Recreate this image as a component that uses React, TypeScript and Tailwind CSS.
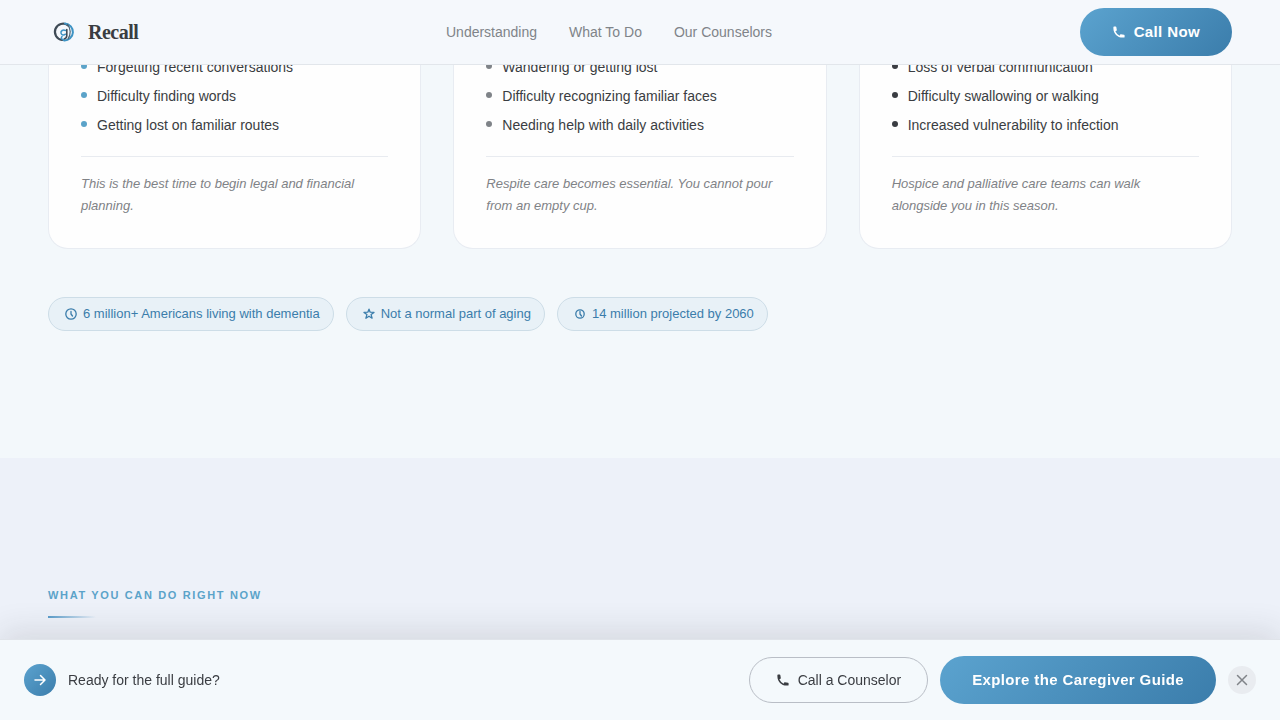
import React from 'react';

interface Stage {
  id: string;
  dot: string;
  signs: string[];
  note: string;
}

const stages: Stage[] = [
  {
    id: 'early',
    dot: 'bg-[#5ba3c9]',
    signs: ['Forgetting recent conversations', 'Difficulty finding words', 'Getting lost on familiar routes'],
    note: 'This is the best time to begin legal and financial planning.',
  },
  {
    id: 'middle',
    dot: 'bg-[#7f8388]',
    signs: ['Wandering or getting lost', 'Difficulty recognizing familiar faces', 'Needing help with daily activities'],
    note: 'Respite care becomes essential. You cannot pour from an empty cup.',
  },
  {
    id: 'late',
    dot: 'bg-[#3a3d42]',
    signs: ['Loss of verbal communication', 'Difficulty swallowing or walking', 'Increased vulnerability to infection'],
    note: 'Hospice and palliative care teams can walk alongside you in this season.',
  },
];

const navLinks = [
  { label: 'Understanding', href: '#understanding' },
  { label: 'What To Do', href: '#what-to-do' },
  { label: 'Our Counselors', href: '#counselors' },
];

const PhoneIcon = () => (
  <svg className="size-[14px] shrink-0" viewBox="0 0 20 20" fill="currentColor" aria-hidden="true">
    <path d="M2 3a1 1 0 0 1 1-1h2.153a1 1 0 0 1 .986.836l.74 4.435a1 1 0 0 1-.54 1.060l-1.548.773a11.037 11.037 0 0 0 6.105 6.105l.774-1.548a1 1 0 0 1 1.059-.54l4.435.74a1 1 0 0 1 .836.986V17a1 1 0 0 1-1 1h-2C7.820 18 2 12.180 2 5V3z" />
  </svg>
);

const ClockIcon = ({ radius }: { radius: number }) => (
  <svg className="size-3 shrink-0" viewBox="0 0 12 12" fill="none" stroke="currentColor" strokeWidth="1.300" strokeLinecap="round" strokeLinejoin="round" aria-hidden="true">
    <circle cx="6" cy="6" r={radius} />
    <path d="M6 3.500V6l1.500 2" />
  </svg>
);

const StarIcon = () => (
  <svg className="size-3 shrink-0" viewBox="0 0 12 12" fill="none" stroke="currentColor" strokeWidth="1.300" strokeLinejoin="round" aria-hidden="true">
    <path d="M6 1.200l1.200 3 3.800.200-2.900 2.200 1 3.600L6 8.200l-3.100 2 1-3.600L1 4.400l3.800-.200z" />
  </svg>
);

const Logo = () => (
  <svg className="size-8" viewBox="0 0 32 32" fill="none" strokeLinecap="round" aria-hidden="true">
    <path d="M14 24A8.200 8.200 0 1 1 20 9.300" stroke="#3f4b56" strokeWidth="2.200" />
    <path d="M17 7.600A8.400 8.400 0 1 1 16 24.400" stroke="#3d93c4" strokeWidth="2" />
    <path d="M19.500 8.500c3.500 4 3.500 10 .500 14.500" stroke="#4c6475" strokeWidth="1.200" />
    <path d="M17.500 14.500c-2.500-1.200-5 .300-4.500 2.700.400 2 2.800 2.300 4.500 1" stroke="#3d93c4" strokeWidth="1.500" />
    <path d="M18.800 13.500v6c0 2-1.200 3-2.600 3.500" stroke="#3f4b56" strokeWidth="1.600" />
    <path d="M14 20.500c-1.300 1.300-.500 3 1.500 3.300" stroke="#3d93c4" strokeWidth="1.500" />
  </svg>
);

const Header = () => (
  <header className="fixed inset-x-0 top-0 z-20 border-b border-[#e2e6eb] bg-[#f5f8fc]">
    <div className="flex h-16 items-center justify-between px-12">
      <a href="#" className="flex items-center gap-2">
        <Logo />
        <span className="font-['Liberation_Serif',serif] text-xl font-bold tracking-tight text-[#3a3d42]">Recall</span>
      </a>
      <nav className="flex gap-8">
        {navLinks.map((link) => (
          <a key={link.href} href={link.href} className="text-sm text-[#808489]">
            {link.label}
          </a>
        ))}
      </nav>
      <button type="button" className="flex h-12 items-center gap-2 rounded-full bg-linear-135 from-[#5ba3cf] to-[#3b7dab] px-8 text-[15px] font-bold tracking-wide text-white">
        <PhoneIcon />
        Call Now
      </button>
    </div>
  </header>
);

const StageCard = ({ stage }: { stage: Stage }) => (
  <article className="rounded-b-[20px] border border-t-0 border-[#e8ecf2] bg-[#fefefe] px-8 pt-[57px] pb-[31px]">
    <ul className="flex flex-col gap-2">
      {stage.signs.map((sign) => (
        <li key={sign} className="flex items-start gap-[10px] text-sm leading-[21px] text-[#3a3d42]">
          <span className={`mt-[6px] size-[6px] shrink-0 rounded-full ${stage.dot}`} />
          {sign}
        </li>
      ))}
    </ul>
    <p className="mt-5 border-t border-[#e8ebf0] pt-4 text-[13px] leading-[22px] text-[#808286] italic">{stage.note}</p>
  </article>
);

const Chip = ({ icon, children }: { icon: React.ReactNode; children: React.ReactNode }) => (
  <span className="flex h-[34px] items-center gap-[6px] rounded-full border border-[#cddde7] bg-[#e8f1f7] pr-[13px] pl-4 text-[13px] text-[#3b7dab]">
    {icon}
    {children}
  </span>
);

const GuideBar = () => (
  <aside className="fixed inset-x-0 bottom-0 z-20 border-t border-[#e0e4ea] bg-[#f4f9fc] shadow-[0_-8px_32px_rgba(40,44,40,0.12)]">
    <div className="flex h-20 items-center justify-between px-6">
      <div className="flex items-center gap-3">
        <span className="flex size-8 items-center justify-center rounded-full bg-linear-135 from-[#5ba3cf] to-[#3b7dab] text-white">
          <svg className="size-4" viewBox="0 0 16 16" fill="none" stroke="currentColor" strokeWidth="1.500" strokeLinecap="round" strokeLinejoin="round" aria-hidden="true">
            <path d="M3 8h10M8.500 3.500L13 8l-4.500 4.500" />
          </svg>
        </span>
        <p className="text-sm text-[#3a3d42]">Ready for the full guide?</p>
      </div>
      <div className="flex items-center gap-3">
        <button type="button" className="flex h-[46px] items-center gap-2 rounded-full border border-[#b9bec6] px-[26px] text-sm text-[#3a3d42]">
          <PhoneIcon />
          Call a Counselor
        </button>
        <button type="button" className="h-12 rounded-full bg-linear-135 from-[#5ba3cf] to-[#3b7dab] px-8 text-[15px] font-bold tracking-wide text-white">
          Explore the Caregiver Guide
        </button>
        <button type="button" aria-label="Close" className="flex size-7 items-center justify-center rounded-full bg-[#e9ecf0] text-[#808489]">
          <svg className="size-3" viewBox="0 0 12 12" fill="none" stroke="currentColor" strokeWidth="1.500" strokeLinecap="round" aria-hidden="true">
            <path d="M1.500 1.500l9 9M10.500 1.500l-9 9" />
          </svg>
        </button>
      </div>
    </div>
  </aside>
);

const App: React.FC = () => {
  return (
    <div className="flex min-h-screen flex-col bg-[#edf1f9] font-['Liberation_Sans',sans-serif]">
      <Header />

      <main>
        <section id="understanding" className="bg-[#f3f8fb] px-12 pb-[127px]">
          <div className="grid grid-cols-3 gap-8">
            {stages.map((stage) => (
              <StageCard key={stage.id} stage={stage} />
            ))}
          </div>
          <div className="mt-12 flex flex-wrap gap-3">
            <Chip icon={<ClockIcon radius={5.2} />}>6 million+ Americans living with dementia</Chip>
            <Chip icon={<StarIcon />}>Not a normal part of aging</Chip>
            <Chip icon={<ClockIcon radius={4.2} />}>14 million projected by 2060</Chip>
          </div>
        </section>

        <section id="what-to-do" className="px-12 pt-32">
          <h2 className="text-[11px] leading-[18px] font-bold tracking-[0.15em] text-[#5ba3c9] uppercase">What you can do right now</h2>
          <div className="mt-3 h-[2px] w-12 bg-linear-to-r from-[#5b9dcb] to-transparent" />
        </section>
      </main>

      <GuideBar />
    </div>
  );
};

export default App;
